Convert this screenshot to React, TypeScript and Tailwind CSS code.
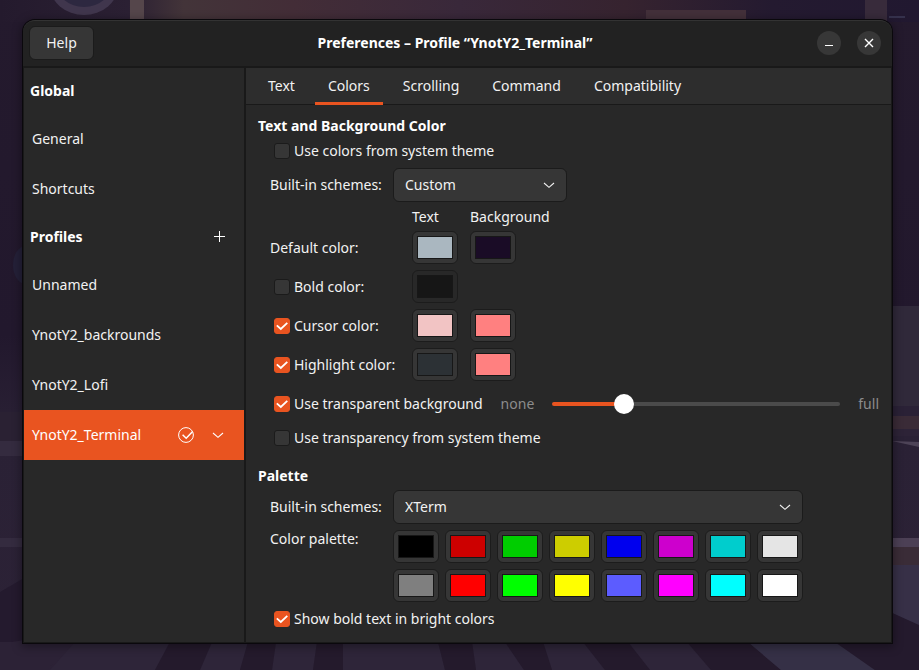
import { useState } from "react";
import type { ReactNode } from "react";

const TABS = ["Text", "Colors", "Scrolling", "Command", "Compatibility"];

const PALETTE = [
  ["Black", "#000000"],
  ["Red", "#cd0000"],
  ["Green", "#00cd00"],
  ["Yellow", "#cdcd00"],
  ["Blue", "#0000ee"],
  ["Magenta", "#cd00cd"],
  ["Cyan", "#00cdcd"],
  ["White", "#e5e5e5"],
  ["Bright black", "#7f7f7f"],
  ["Bright red", "#ff0000"],
  ["Bright green", "#00ff00"],
  ["Bright yellow", "#ffff00"],
  ["Bright blue", "#5c5cff"],
  ["Bright magenta", "#ff00ff"],
  ["Bright cyan", "#00ffff"],
  ["Bright white", "#ffffff"],
];

function Chevron() {
  return (
    <svg className="block" width="16" height="16" viewBox="0 0 16 16" fill="none" stroke="currentColor" strokeWidth="1.1" aria-hidden="true">
      <path d="M3 6 8 10.3 13 6" />
    </svg>
  );
}

function Check({ label, initial = false }: { label: string; initial?: boolean }) {
  const [on, setOn] = useState(initial);
  return (
    <label className="flex items-center gap-1 whitespace-nowrap">
      <span className="grid size-4 shrink-0">
        <input
          type="checkbox"
          checked={on}
          onChange={(e) => setOn(e.target.checked)}
          className="col-start-1 row-start-1 size-4 appearance-none rounded-[3px] border border-[#1b1b1b] bg-[#363636] checked:border-[#e95420] checked:bg-[#e95420]"
        />
        {on && (
          <svg className="pointer-events-none col-start-1 row-start-1" width="16" height="16" viewBox="0 0 16 16" fill="none" stroke="#fff" strokeWidth="1.8" aria-hidden="true">
            <path d="M2.8 7.4 6.8 11 13.3 4.8" />
          </svg>
        )}
      </span>
      {label}
    </label>
  );
}

function Swatch({ name, color, disabled = false }: { name: string; color: string; disabled?: boolean }) {
  const [value, setValue] = useState(color);
  return (
    <input
      type="color"
      aria-label={name}
      value={value}
      disabled={disabled}
      onChange={(e) => setValue(e.target.value)}
      className="block h-[33px] w-[46px] appearance-none rounded-md border border-[#1c1c1c] bg-[#363636] p-1 disabled:bg-[#282828] [&::-webkit-color-swatch]:rounded-none [&::-webkit-color-swatch]:border [&::-webkit-color-swatch]:border-[#171717] [&::-webkit-color-swatch-wrapper]:p-0"
    />
  );
}

function Select({ id, options, width }: { id: string; options: string[]; width: string }) {
  return (
    <span className={`grid h-[34px] items-center ${width}`}>
      <select
        id={id}
        className="col-start-1 row-start-1 h-full w-full appearance-none rounded-md border border-[#1b1b1b] bg-[#363636] pr-8 pl-[11px]"
      >
        {options.map((o) => (
          <option key={o}>{o}</option>
        ))}
      </select>
      <span className="pointer-events-none col-start-1 row-start-1 mr-[10px] justify-self-end">
        <Chevron />
      </span>
    </span>
  );
}

function SideHeading({ children, action }: { children: ReactNode; action?: ReactNode }) {
  return (
    <div className="flex h-[46px] items-center justify-between pr-4 pl-[6px]">
      <h2 className="font-bold text-white">{children}</h2>
      {action}
    </div>
  );
}

function SideRow({ children }: { children: ReactNode }) {
  return <button className="flex h-[50px] w-full items-center pl-2 text-left">{children}</button>;
}

function Wallpaper() {
  return (
    <svg className="absolute inset-0 size-full" viewBox="0 0 919 670" preserveAspectRatio="none" aria-hidden="true">
      <defs>
        <linearGradient id="top" x1="0" x2="1" y1="0" y2="0">
          <stop offset="0" stopColor="#241a2d" />
          <stop offset="0.14" stopColor="#2b2033" />
          <stop offset="0.2" stopColor="#433439" />
          <stop offset="0.32" stopColor="#432d37" />
          <stop offset="0.5" stopColor="#39283a" />
          <stop offset="0.68" stopColor="#36232f" />
          <stop offset="0.84" stopColor="#241a30" />
          <stop offset="1" stopColor="#211830" />
        </linearGradient>
        <linearGradient id="side" x1="0" x2="0" y1="0" y2="1">
          <stop offset="0" stopColor="#241a2d" />
          <stop offset="0.5" stopColor="#22182d" />
          <stop offset="0.65" stopColor="#2a2135" />
          <stop offset="1" stopColor="#2c2236" />
        </linearGradient>
      </defs>
      <rect width="919" height="670" fill="url(#side)" />
      <rect width="919" height="22" fill="url(#top)" />
      <ellipse cx="84" cy="-14" rx="34" ry="29" fill="#40364d" />
      <ellipse cx="84" cy="-19" rx="29" ry="26" fill="#2d2840" />
      <rect x="130" width="14" height="22" fill="#55464b" />
      <rect x="646" y="10" width="100" height="10" fill="#43303a" />
      <rect x="865" width="22" height="22" fill="#382b3b" />
      <rect x="889" y="16" width="16" height="2" fill="#35314c" />
      <ellipse cx="26" cy="265" rx="13" ry="19" fill="#242038" />
      <path d="M0 412H24V441H0Z" fill="#2a2133" />
      <path d="M0 441H24V456H0ZM0 538H24V547H0Z" fill="#342b3f" />
      <path d="M0 592 24 578V640L0 644Z" fill="#241a2e" />
      <path d="M0 642H80L46 670H0Z" fill="#2c2236" />
      <path d="M75 642H170L155 670H50ZM212 642H248L240 670H200ZM276 642H317L313 670H272ZM343 642H438L445 670H343ZM472 642H505L524 670H476ZM543 642H583L605 670H552ZM628 642H687L711 670H650Z" fill="#2e2539" />
      <path d="M170 642H212L200 670H155ZM248 642H276L272 670H240ZM317 642H343V670H313ZM438 642H472L476 670H445ZM505 642H543L552 670H524ZM583 642H628L650 670H605ZM687 642H748L781 670H711Z" fill="#241a2c" />
      <path d="M748 642H835L875 670H781Z" fill="#353046" />
      <rect x="892" y="306" width="27" height="100" fill="#30293a" />
      <rect x="892" y="406" width="27" height="10" fill="#2a2136" />
      <rect x="892" y="416" width="27" height="13" fill="#3a2b37" />
      <rect x="892" y="429" width="27" height="7" fill="#2d2337" />
      <path d="M892 441 919 442V447Z" fill="#4d4357" />
      <rect x="890" y="538" width="29" height="9" fill="#4c4055" />
      <rect x="890" y="547" width="29" height="18" fill="#3a2c37" />
      <path d="M890 565H919V626L890 612Z" fill="#373047" />
      <path d="M890 612 919 625V670H875L835 642Z" fill="#241a2d" />
    </svg>
  );
}

export default function App() {
  const [tab, setTab] = useState("Colors");
  const [opacity, setOpacity] = useState(23);
  const fill = 3.5 + opacity * 0.93;

  return (
    <div className="relative flex min-h-screen bg-[#261b30] pt-5 pr-[27px] pb-[27px] pl-[23px] font-['Noto_Sans','Open_Sans',sans-serif] text-sm leading-5 text-[#f2f2f2]">
      <Wallpaper />
      <div className="relative flex flex-1 flex-col overflow-hidden rounded-t-xl border-t border-[#333333] bg-[#222222] shadow-[0_0_0_1px_#0a080c,0_2px_10px_2px_rgba(0,0,0,0.35)]">
        <header className="grid h-[47px] grid-cols-[1fr_auto_1fr] items-center border-b-2 border-[#191919] pr-[11px] pb-px pl-[6px]">
          <button className="h-[34px] w-[65px] rounded-md border border-[#1b1b1b] bg-[#363636]">Help</button>
          <h1 className="font-bold text-white">Preferences – Profile “YnotY2_Terminal”</h1>
          <div className="flex justify-end gap-4">
            <button aria-label="Minimize" className="flex size-6 items-center justify-center rounded-full bg-[#373737]">
              <svg width="16" height="16" viewBox="0 0 16 16" aria-hidden="true">
                <path d="M4 10h8v1H4z" fill="#fff" />
              </svg>
            </button>
            <button aria-label="Close" className="flex size-6 items-center justify-center rounded-full bg-[#373737]">
              <svg width="16" height="16" viewBox="0 0 16 16" stroke="#fff" strokeWidth="1.4" aria-hidden="true">
                <path d="m4 4 8 8M12 4l-8 8" />
              </svg>
            </button>
          </div>
        </header>

        <div className="flex flex-1 border-x border-b border-[#191919] bg-[#282828]">
          <nav aria-label="Preferences" className="w-[222px] shrink-0 border-r-2 border-[#191919]">
            <SideHeading>Global</SideHeading>
            <SideRow>General</SideRow>
            <SideRow>Shortcuts</SideRow>
            <SideHeading
              action={
                <button aria-label="New profile">
                  <svg className="block" width="17" height="17" viewBox="0 0 17 17" stroke="#fff" strokeWidth="1" aria-hidden="true">
                    <path d="M8.5 2v11M3 7.5h11" />
                  </svg>
                </button>
              }
            >
              Profiles
            </SideHeading>
            <SideRow>Unnamed</SideRow>
            <SideRow>YnotY2_backrounds</SideRow>
            <SideRow>YnotY2_Lofi</SideRow>
            <div className="flex h-[50px] items-center bg-[#e95420] pr-[18px] pl-2 text-white">
              <button className="h-full flex-1 text-left">YnotY2_Terminal</button>
              <svg width="16" height="16" viewBox="0 0 16 16" fill="none" stroke="currentColor" role="img" aria-label="Default profile">
                <circle cx="8" cy="8" r="7.4" strokeWidth="1" />
                <path d="M4.6 7.8 8.2 11.2 14.4 4.8" strokeWidth="1.5" />
              </svg>
              <button aria-label="Profile menu" className="ml-4">
                <Chevron />
              </button>
            </div>
          </nav>

          <main className="min-w-0 flex-1">
            <div role="tablist" className="flex h-[37px] gap-[7px] border-b border-[#191919] bg-[#2d2d2d] pl-[9px]">
              {TABS.map((t) => (
                <button
                  key={t}
                  role="tab"
                  aria-selected={t === tab}
                  onClick={() => setTab(t)}
                  className="-mb-px h-[37px] border-b-3 border-transparent px-[13px] pt-px aria-selected:border-[#e95420]"
                >
                  {t}
                </button>
              ))}
            </div>

            <div className="px-3 pt-[11px] pb-3">
              <h2 className="mb-1 font-bold text-white">Text and Background Color</h2>
              <div className="flex flex-col gap-[6px] pl-3">
                <div className="flex h-[22px] items-center pl-1">
                  <Check label="Use colors from system theme" />
                </div>
                <div className="grid grid-cols-[123px_1fr] items-center">
                  <label htmlFor="scheme">Built-in schemes:</label>
                  <Select id="scheme" options={["Custom"]} width="w-[174px]" />
                </div>
                <div className="grid grid-cols-[142px_46px_1fr] items-center gap-y-[6px]">
                  <span />
                  <span className="leading-[17px]">Text</span>
                  <span className="pl-3 leading-[17px]">Background</span>
                  <span>Default color:</span>
                  <Swatch name="Default text color" color="#aab7c0" />
                  <span className="pl-3">
                    <Swatch name="Default background color" color="#1a0c26" />
                  </span>
                  <span className="pl-1">
                    <Check label="Bold color:" />
                  </span>
                  <Swatch name="Bold color" color="#161616" disabled />
                  <span />
                  <span className="pl-1">
                    <Check label="Cursor color:" initial />
                  </span>
                  <Swatch name="Cursor text color" color="#f2c4c4" />
                  <span className="pl-3">
                    <Swatch name="Cursor background color" color="#ff8080" />
                  </span>
                  <span className="pl-1">
                    <Check label="Highlight color:" initial />
                  </span>
                  <Swatch name="Highlight text color" color="#2c3135" />
                  <span className="pl-3">
                    <Swatch name="Highlight background color" color="#ff8080" />
                  </span>
                </div>
                <div className="flex h-[34px] items-center gap-[18px] pl-1">
                  <Check label="Use transparent background" initial />
                  <span className="text-[#8c8c8c]">none</span>
                  <input
                    type="range"
                    aria-label="Transparency"
                    min={0}
                    max={100}
                    value={opacity}
                    onChange={(e) => setOpacity(Number(e.target.value))}
                    style={{ backgroundImage: `linear-gradient(to right, #e95420 ${fill}%, #4b4b4b ${fill}%)` }}
                    className="h-1 min-w-0 flex-1 appearance-none rounded-full [&::-webkit-slider-thumb]:size-5 [&::-webkit-slider-thumb]:appearance-none [&::-webkit-slider-thumb]:rounded-full [&::-webkit-slider-thumb]:bg-white"
                  />
                  <span className="text-[#8c8c8c]">full</span>
                </div>
                <div className="flex h-[22px] items-center pl-1">
                  <Check label="Use transparency from system theme" />
                </div>
              </div>

              <h2 className="mt-[17px] mb-1 font-bold text-white">Palette</h2>
              <div className="flex flex-col gap-[6px] pl-3">
                <div className="grid grid-cols-[123px_1fr] items-center">
                  <label htmlFor="palette">Built-in schemes:</label>
                  <Select id="palette" options={["XTerm"]} width="w-[410px]" />
                </div>
                <div className="grid grid-cols-[123px_1fr] items-start">
                  <span className="leading-[17px]">Color palette:</span>
                  <div className="grid grid-cols-[repeat(8,46px)] gap-[6px]">
                    {PALETTE.map(([name, color]) => (
                      <Swatch key={name} name={name} color={color} />
                    ))}
                  </div>
                </div>
                <div className="flex h-[22px] items-center pl-1">
                  <Check label="Show bold text in bright colors" initial />
                </div>
              </div>
            </div>
          </main>
        </div>
      </div>
    </div>
  );
}
